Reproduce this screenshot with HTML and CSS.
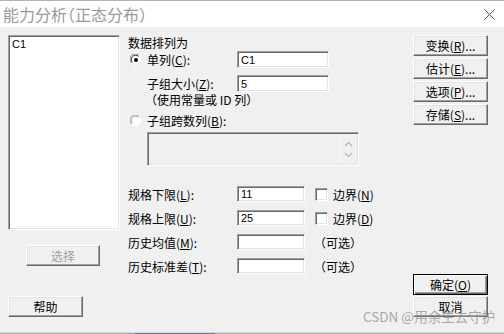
FILE: index.html
```html
<!DOCTYPE html>
<html>
<head>
<meta charset="utf-8">
<link rel="stylesheet" href="styles.css">
</head>
<body>
<div class="win">
  <div class="titlebar">
    <span class="title">能力分析（正态分布）</span>
    <svg class="close" width="11" height="11" viewBox="0 0 11 11"><path d="M0.5 0.5 L10.5 10.5 M10.5 0.5 L0.5 10.5" stroke="#555" stroke-width="1" fill="none"/></svg>
  </div>
  <div class="content">
    <div class="left">
      <div class="listbox sunken">C1</div>
      <div class="btn btn-select disabled">选择</div>
      <div class="btn btn-help">帮助</div>
    </div>
    <div class="mid">
      <div class="grp-title">数据排列为</div>
      <div class="row r1">
        <svg class="radio" width="12" height="12" viewBox="0 0 12 12">
          <path d="M1.5 9 A5 5 0 0 1 9 1.5" stroke="#808080" fill="none"/>
          <path d="M9 1.5 A5 5 0 0 1 1.5 9" stroke="#ffffff" fill="none"/>
          <circle cx="6" cy="6" r="4.5" fill="#fff" stroke="none"/>
          <path d="M2.5 8.5 A4 4 0 0 1 8.5 2.5" stroke="#404040" fill="none"/>
          <circle cx="6" cy="6" r="2" fill="#000"/>
        </svg>
        <span class="lbl">单列(<u>C</u>):</span>
        <span class="tb sunken">C1</span>
      </div>
      <div class="row r2">
        <span class="lbl">子组大小(<u>Z</u>):</span>
        <span class="tb sunken">5</span>
      </div>
      <div class="note">（使用常量或 ID 列）</div>
      <div class="row r4">
        <svg class="radio" width="12" height="12" viewBox="0 0 12 12">
          <path d="M1.5 9 A5 5 0 0 1 9 1.5" stroke="#a8a8a8" fill="none"/>
          <path d="M9 1.5 A5 5 0 0 1 1.5 9" stroke="#ffffff" fill="none"/>
          <circle cx="6" cy="6" r="4.5" fill="#fff" stroke="none"/>
          <path d="M2.5 8.5 A4 4 0 0 1 8.5 2.5" stroke="#b0b0b0" fill="none"/>
        </svg>
        <span class="lbl">子组跨数列(<u>B</u>):</span>
      </div>
      <div class="multibox sunken">
        <div class="scroll">
          <svg width="9" height="6" viewBox="0 0 9 6"><path d="M1 5 L4.5 1.5 L8 5" stroke="#b4b4b4" stroke-width="1.2" fill="none"/></svg>
          <svg width="9" height="6" viewBox="0 0 9 6"><path d="M1 1 L4.5 4.5 L8 1" stroke="#b4b4b4" stroke-width="1.2" fill="none"/></svg>
        </div>
      </div>
      <div class="specs">
        <div class="srow">
          <span class="slbl">规格下限(<u>L</u>):</span>
          <span class="stb sunken">11</span>
          <span class="cb sunken"></span>
          <span class="cbl">边界(<u>N</u>)</span>
        </div>
        <div class="srow">
          <span class="slbl">规格上限(<u>U</u>):</span>
          <span class="stb sunken">25</span>
          <span class="cb sunken"></span>
          <span class="cbl">边界(<u>D</u>)</span>
        </div>
        <div class="srow">
          <span class="slbl">历史均值(<u>M</u>):</span>
          <span class="stb sunken"></span>
          <span class="opt">（可选）</span>
        </div>
        <div class="srow">
          <span class="slbl">历史标准差(<u>T</u>):</span>
          <span class="stb sunken"></span>
          <span class="opt">（可选）</span>
        </div>
      </div>
    </div>
    <div class="right">
      <div class="btn">变换(<u>R</u>)...</div>
      <div class="btn">估计(<u>E</u>)...</div>
      <div class="btn">选项(<u>P</u>)...</div>
      <div class="btn">存储(<u>S</u>)...</div>
      <div class="btn btn-ok">确定(<u>O</u>)</div>
      <div class="btn btn-cancel">取消</div>
    </div>
  </div>
  <div class="strip"><span class="seg"></span></div>
  <div class="watermark">CSDN @用余生去守护</div>
</div>
</body>
</html>
```
FILE: styles.css
```css
* { box-sizing: border-box; }
html, body { margin: 0; padding: 0; }
body {
  width: 504px;
  height: 334px;
  overflow: hidden;
  background: #f0f0f0;
  font-family: "Noto Sans CJK SC", "Liberation Sans", sans-serif;
  font-size: 12px;
  color: #000;
}
.win {
  position: relative;
  width: 504px;
  height: 334px;
  display: flex;
  flex-direction: column;
}
.titlebar {
  height: 27px;
  background: #fff;
  border-top: 1px solid #b4b4b4;
  display: flex;
  align-items: center;
  justify-content: space-between;
  padding: 0 9px 0 3px;
}
.title {
  font-size: 16px;
  color: #9a9a9a;
  line-height: 18px;
  font-feature-settings: "halt";
}
.close { display: block; }
.content {
  flex: 1;
  display: flex;
  padding-top: 8px;
}
u { text-decoration: underline; text-underline-offset: 1px; }

.sunken {
  background: #fff;
  border: 1px solid;
  border-color: #a0a0a0 #fff #fff #a0a0a0;
  box-shadow: inset 1px 1px #696969, inset -1px -1px #e3e3e3;
}
.btn {
  flex: none;
  height: 21px;
  background: #f0f0f0;
  border: 1px solid;
  border-color: #fff #696969 #696969 #fff;
  box-shadow: inset -1px -1px #a0a0a0, inset 1px 1px #e3e3e3;
  display: flex;
  align-items: center;
  justify-content: center;
  font-size: 12px;
  line-height: 14px;
  white-space: nowrap;
}

.left {
  width: 112px;
  margin-left: 8px;
  display: flex;
  flex-direction: column;
}
.listbox {
  height: 195px;
  padding: 2px 3px;
  font-family: "Liberation Sans", sans-serif;
  font-size: 11px;
  line-height: 13px;
}
.btn-select {
  margin-top: 15px;
  margin-left: 18px;
  width: 74px;
  color: #a0a0a0;
}
.btn-help {
  margin-top: 30px;
  width: 75px;
}

.mid {
  flex: none;
  width: 232px;
  margin-left: 8px;
  display: flex;
  flex-direction: column;
}
.grp-title {
  height: 16px;
  line-height: 15px;
}
.row {
  display: flex;
  align-items: center;
  white-space: nowrap;
}
.r1 { height: 17px; padding-left: 2px; }
.r2 { height: 17px; margin-top: 7px; padding-left: 19px; }
.radio { flex: none; display: block; }
.r1 .lbl, .r4 .lbl { margin-left: 5px; }
.lbl { line-height: 15px; flex: none; }
.r1 .lbl { width: 90px; }
.r2 .lbl { width: 90px; }
.tb {
  flex: none;
  width: 92px;
  height: 17px;
  padding: 2px 3px;
  font-family: "Liberation Sans", sans-serif;
  font-size: 11px;
  line-height: 12px;
}
.note {
  height: 15px;
  line-height: 15px;
  padding-left: 17px;
  white-space: nowrap;
}
.r4 { height: 15px; margin-top: 6px; padding-left: 2px; }
.multibox {
  margin-top: 4px;
  margin-left: 19px;
  width: 212px;
  height: 34px;
  background: #f0f0f0;
  display: flex;
  justify-content: flex-end;
  padding: 2px;
}
.scroll {
  width: 17px;
  border-left: 1px solid #f8f8f8;
  display: flex;
  flex-direction: column;
  align-items: center;
  justify-content: space-between;
  padding: 6px 0 5px;
}
.scroll svg { display: block; }

.specs {
  margin-top: 20px;
  display: flex;
  flex-direction: column;
  gap: 8px;
}
.srow {
  height: 16px;
  display: flex;
  align-items: center;
  white-space: nowrap;
}
.srow > * { flex: none; }
.slbl { width: 109px; line-height: 15px; }
.stb {
  width: 68px;
  height: 16px;
  padding: 1px 3px;
  font-family: "Liberation Sans", sans-serif;
  font-size: 11px;
  line-height: 12px;
}
.cb {
  width: 13px;
  height: 13px;
  margin-left: 10px;
}
.cbl { margin-left: 5px; line-height: 15px; }
.opt { margin-left: 9px; line-height: 15px; }

.right {
  flex: none;
  width: 75px;
  margin-left: 53px;
  display: flex;
  flex-direction: column;
  gap: 2px;
}
.btn-ok {
  margin-top: 147px;
  border: 1px solid #000;
  box-shadow: inset 1px 1px #fff, inset -1px -1px #696969, inset -2px -2px #a0a0a0;
}
.btn-cancel { margin-top: -1px; }

.strip {
  height: 2px;
  background: #a8a8a8;
  border-top: 1px solid #d8d8d8;
  position: relative;
}
.seg {
  position: absolute;
  left: 135px;
  top: 0;
  width: 80px;
  height: 1px;
  background: #6a80a0;
}
.watermark {
  position: absolute;
  left: 363px;
  top: 308px;
  font-size: 13.5px;
  line-height: 16px;
  color: rgba(140, 140, 140, 0.75);
  white-space: nowrap;
}
```
